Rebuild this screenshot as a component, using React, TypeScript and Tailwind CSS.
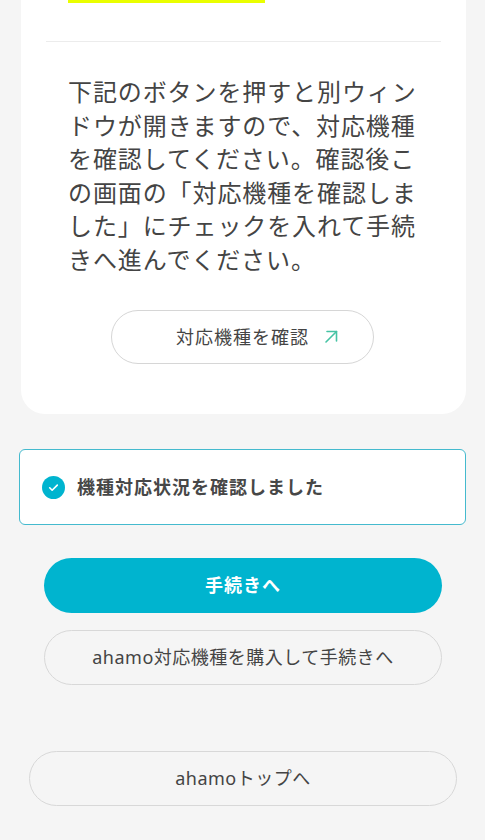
import React, { useState } from 'react';

const font = { fontFamily: '"Noto Sans", "Noto Sans CJK JP", sans-serif' };

const ArrowUpRight: React.FC = () => (
    <svg width="16" height="16" viewBox="0 0 16 16" fill="none" stroke="#45c3a4" strokeWidth="1.6" strokeLinecap="round" strokeLinejoin="round">
        <path d="M3 13 13.5 2.5" />
        <path d="M4 2.5h9.5V12" />
    </svg>
);

const App: React.FC = () => {
    const [checked, setChecked] = useState(true);

    return (
        <div className="min-h-[840px] w-full overflow-hidden bg-[#f5f5f5] text-[#444444]" style={font}>
            {/* card */}
            <div className="ml-[21px] w-[445px] rounded-b-[24px] bg-white pb-[50px]">
                <div className="ml-[47px] h-[3px] w-[197px] bg-[#eaff00]" />
                <div className="mx-[25px] mt-[38px] h-px bg-[#ececec]" />
                <p className="mt-[33px] pl-[47px] pr-[45px] text-[24px] leading-[33.5px] tracking-[0.9px]">
                    下記のボタンを押すと別ウィンドウが開きますので、対応機種を確認してください。確認後この画面の「対応機種を確認しました」にチェックを入れて手続きへ進んでください。
                </p>
                <button className="relative ml-[90px] mt-[34px] flex h-[54px] w-[263px] items-center justify-center rounded-full border border-[#d6d6d6] bg-white text-[18px] tracking-[1px] text-[#444444]">
                    <span>対応機種を確認</span>
                    <span className="absolute right-[34px] top-1/2 -translate-y-1/2">
                        <ArrowUpRight />
                    </span>
                </button>
            </div>

            {/* confirmation checkbox */}
            <label className="ml-[19px] mt-[35px] flex h-[76px] w-[447px] cursor-pointer items-center gap-[12px] rounded-[6px] border-[1.5px] border-[#44bace] bg-white pl-[22px]">
                <input type="checkbox" className="hidden" checked={checked} onChange={() => setChecked(!checked)} />
                <span className={`flex h-[23px] w-[23px] items-center justify-center rounded-full ${checked ? 'bg-[#00b4cf]' : 'border border-[#bbbbbb] bg-white'}`}>
                    <svg width="13" height="13" viewBox="0 0 24 24" fill="none" stroke="white" strokeWidth="3" strokeLinecap="round" strokeLinejoin="round">
                        <path d="M5 12.5l4.5 4.5L19 7.5" />
                    </svg>
                </span>
                <span className="text-[18px] font-bold tracking-[1px] text-[#474747]">機種対応状況を確認しました</span>
            </label>

            <div className="ml-[44px] mt-[33px] flex w-[398px] flex-col gap-[17px]">
                <button className="flex h-[55px] w-full items-center justify-center rounded-full bg-[#00b4cf] text-[18px] font-bold tracking-[1px] text-white">
                    手続きへ
                </button>
                <button className="flex h-[55px] w-full items-center justify-center rounded-full border border-[#d8d8d8] text-[18px] tracking-[0.5px] text-[#444444]">
                    ahamo対応機種を購入して手続きへ
                </button>
            </div>

            <button className="ml-[29px] mt-[66px] flex h-[55px] w-[428px] items-center justify-center rounded-full border border-[#d8d8d8] text-[18px] tracking-[0.5px] text-[#444444]">
                ahamoトップへ
            </button>
        </div>
    );
};

export default App;
